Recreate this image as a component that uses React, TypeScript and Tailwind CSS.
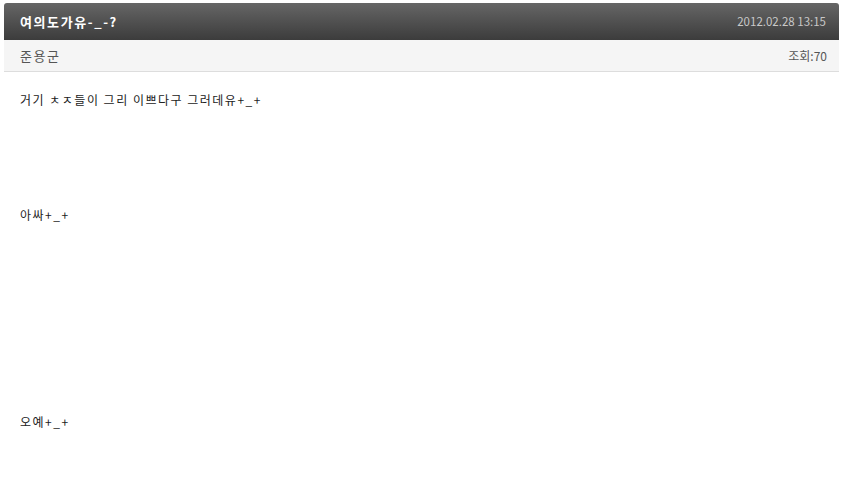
export default function App() {
  const font = { fontFamily: '"Noto Sans CJK KR", "Noto Sans", sans-serif' };
  return (
    <div className="w-[843px] h-[491px] bg-white pt-[3px] px-[4px]" style={font}>
      <div className="w-[835px]">
        <div className="h-[37px] flex items-center justify-between pl-[16px] pr-[13px] rounded-t-[3px] bg-gradient-to-b from-[#666666] to-[#3c3c3c]">
          <span className="text-[13px] font-bold text-white tracking-[1.6px]">여의도가유-_-?</span>
          <span className="text-[11.5px] text-[#c8c8c8]">2012.02.28 13:15</span>
        </div>
        <div className="h-[32px] flex items-center justify-between pl-[16px] pr-[12px] bg-[#f5f5f5] border-b border-[#dddddd]">
          <span className="text-[13px] text-[#555555] tracking-[1.5px]">준용군</span>
          <span className="text-[12px] text-[#555555]">조회:70</span>
        </div>
        <div className="pl-[16px] pt-[16px] text-[12px] leading-[23px] text-[#222222] tracking-[1.5px]">
          <p>거기 ㅊㅈ들이 그리 이쁘다구 그러데유+_+</p>
          <p className="mt-[92px]">아싸+_+</p>
          <p className="mt-[184px]">오예+_+</p>
        </div>
      </div>
    </div>
  );
}
